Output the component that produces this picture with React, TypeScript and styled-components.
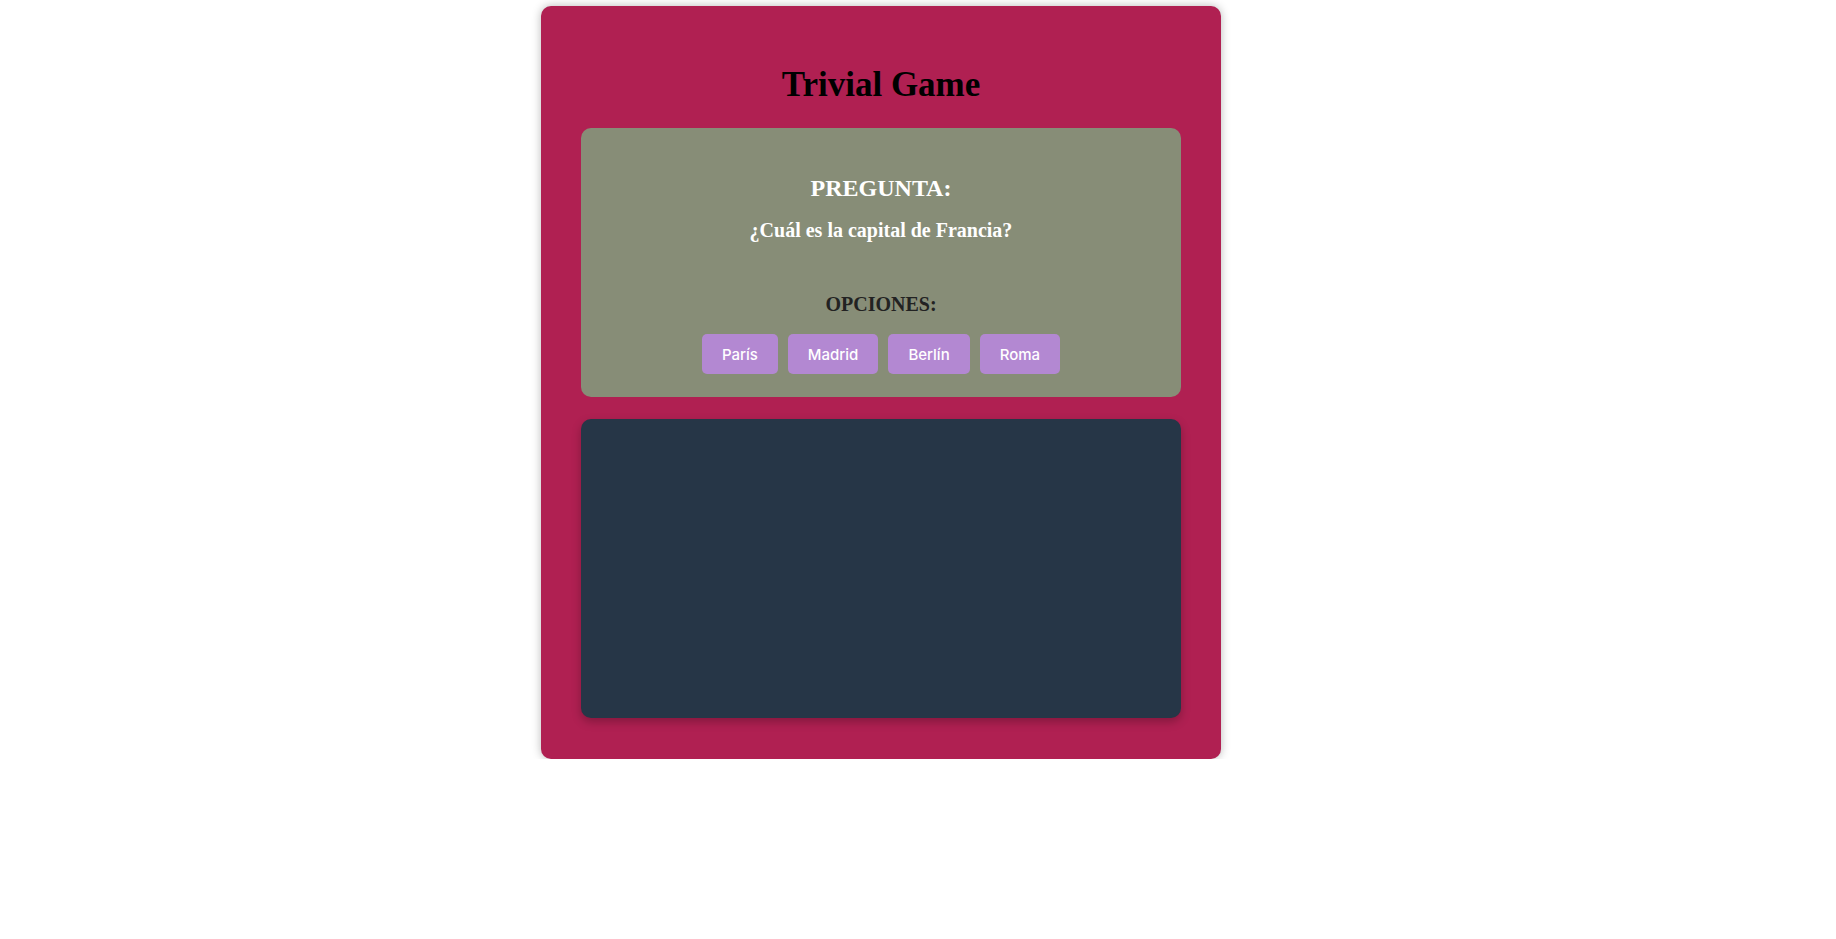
import React from "react";
import styled, { createGlobalStyle } from "styled-components";

const GlobalStyle = createGlobalStyle`
  html, body {
    margin: 0;
    padding: 0;
    background: #ffffff;
  }
  body {
    font-family: "Liberation Serif", "Times New Roman", serif;
  }
`;

const Page = styled.div`
  display: flex;
  align-items: flex-start;
  padding: 6px 0 0 541px;
`;

const GameCard = styled.div`
  width: 680px;
  box-sizing: border-box;
  padding: 40px 40px 41px;
  background: #b02052;
  border-radius: 10px;
  box-shadow: 0 0 10px rgba(0, 0, 0, 0.28);
  display: flex;
  flex-direction: column;
`;

const Title = styled.h1`
  margin: 19px 0 23px;
  font-size: 35px;
  line-height: 40px;
  font-weight: 700;
  color: #000;
  text-align: center;
`;

const QuestionPanel = styled.section`
  height: 269px;
  box-sizing: border-box;
  padding: 46px 20px 23px;
  background: #878d77;
  border-radius: 10px;
  display: flex;
  flex-direction: column;
  align-items: center;
`;

const Label = styled.h2<{ $tone: "light" | "dark"; $size: number; $gap: number }>`
  margin: ${(p) => p.$gap}px 0 0;
  font-size: ${(p) => p.$size}px;
  line-height: ${(p) => p.$size + 4}px;
  font-weight: 700;
  color: ${(p) => (p.$tone === "light" ? "#ffffff" : "#222222")};
  text-align: center;
`;

const QuestionText = styled.p`
  margin: 16px 0 0;
  font-size: 20px;
  line-height: 24px;
  font-weight: 700;
  color: #ffffff;
  text-align: center;
`;

const OptionRow = styled.div`
  margin-top: 18px;
  display: flex;
  gap: 10px;
  justify-content: center;
`;

const OptionButton = styled.button`
  height: 40px;
  padding: 0 20px;
  border: none;
  border-radius: 5px;
  background: #b388d2;
  color: #ffffff;
  font-family: Inter, "Noto Sans", sans-serif;
  font-size: 15px;
  font-weight: 500;
  cursor: pointer;
`;

const ResultPanel = styled.section`
  margin-top: 22px;
  height: 299px;
  background: #263647;
  border-radius: 10px;
  box-shadow: 0 4px 10px rgba(0, 0, 0, 0.25);
`;

const options = ["París", "Madrid", "Berlín", "Roma"];

export default function App() {
  return (
    <>
      <GlobalStyle />
      <Page>
        <GameCard>
          <Title>Trivial Game</Title>
          <QuestionPanel>
            <Label $tone="light" $size={24} $gap={0}>
              PREGUNTA:
            </Label>
            <QuestionText>¿Cuál es la capital de Francia?</QuestionText>
            <Label $tone="dark" $size={20} $gap={50}>
              OPCIONES:
            </Label>
            <OptionRow>
              {options.map((o) => (
                <OptionButton key={o}>{o}</OptionButton>
              ))}
            </OptionRow>
          </QuestionPanel>
          <ResultPanel />
        </GameCard>
      </Page>
    </>
  );
}
